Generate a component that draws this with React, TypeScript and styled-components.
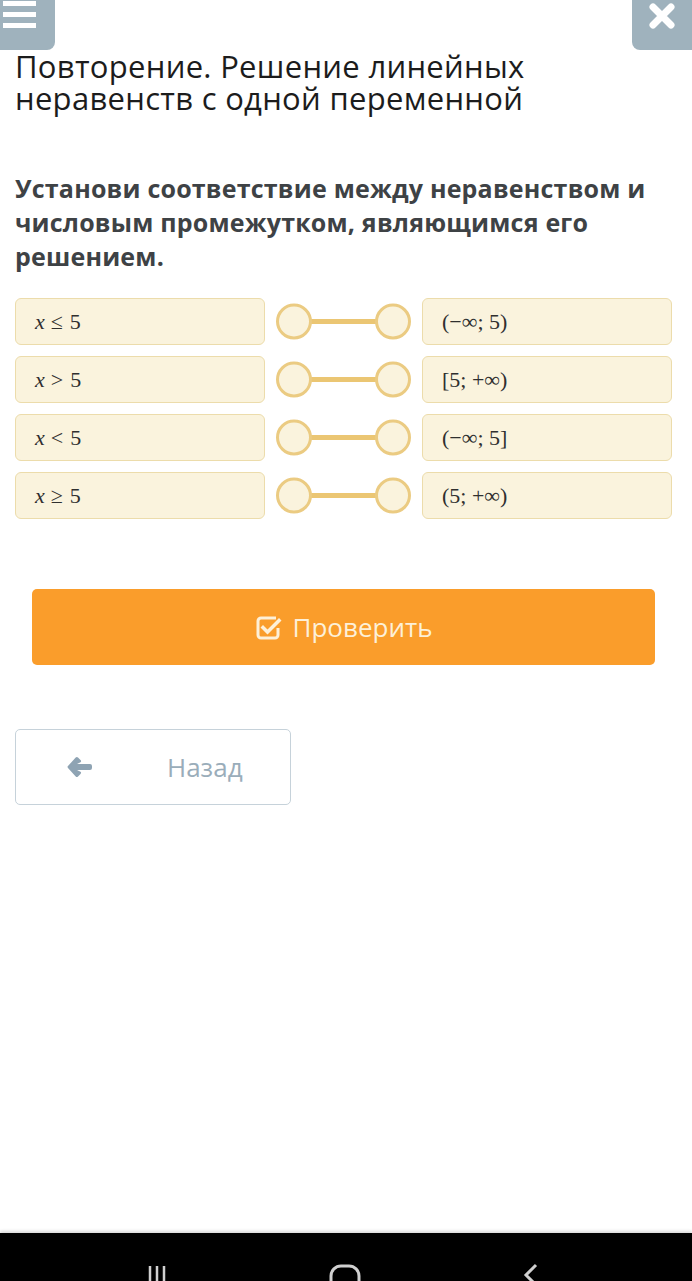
import styled, { createGlobalStyle } from "styled-components";

const GlobalStyle = createGlobalStyle`
    html, body {
        margin: 0;
        padding: 0;
        background: #ffffff;
    }

    body {
        font-family: "Open Sans", "Noto Sans", sans-serif;
    }
`

const Page = styled.div`
    min-height: 100vh;
    display: flex;
    flex-direction: column;
    background: #ffffff;
`

const TopBar = styled.div`
    display: flex;
    justify-content: space-between;
    height: 50px;
`

const MenuButton = styled.div`
    width: 55px;
    height: 50px;
    background-color: #9fb2bd;
    border-bottom-right-radius: 8px;
    display: flex;
    flex-direction: column;
    gap: 6px;
    padding: 1px 0 0 3px;
    box-sizing: border-box;
`

const MenuBar = styled.span`
    display: block;
    width: 33px;
    height: 5px;
    background: #ffffff;
`

const CloseButton = styled.div`
    width: 60px;
    height: 50px;
    background-color: #9fb2bd;
    border-bottom-left-radius: 8px;
    display: flex;
    justify-content: center;
    padding-top: 3px;
    box-sizing: border-box;
`

const Content = styled.div`
    padding: 0 20px 0 15px;
`

const Title = styled.h1`
    margin: 0;
    font-size: 31px;
    line-height: 32px;
    font-weight: 400;
    color: #1c1c1c;
    letter-spacing: 0.3px;
`

const TitleLine = styled.span`
    display: block;
`

const Question = styled.p`
    margin: 57px 0 0;
    font-size: 25px;
    line-height: 34px;
    font-weight: 700;
    color: #3e4245;
    letter-spacing: 0.2px;
`

const Pairs = styled.div`
    margin-top: 25px;
    display: flex;
    flex-direction: column;
    gap: 11px;
`

const PairRow = styled.div`
    display: grid;
    grid-template-columns: 250px 1fr 250px;
    height: 47px;
`

const Card = styled.div`
    background-color: #faf3dd;
    border: 1px solid #ecdcab;
    border-radius: 6px;
    display: flex;
    align-items: center;
    padding-left: 19px;
    box-sizing: border-box;
    font-family: "Liberation Serif", "DejaVu Serif", serif;
    font-size: 22px;
    color: #2f2f2f;
`

const MathVar = styled.i`
    font-style: italic;
`

const MathRel = styled.span`
    margin: 0 7px 0 6px;
`

const Actions = styled.div`
    margin-top: 70px;
    padding: 0 37px 0 32px;
`

const CheckButton = styled.button`
    width: 100%;
    height: 76px;
    border: none;
    border-radius: 5px;
    background-color: #fa9d2b;
    color: #fdf0d8;
    font-family: "Open Sans", sans-serif;
    font-size: 26px;
    display: flex;
    align-items: center;
    justify-content: center;
    gap: 9px;
    padding: 0 0 0 2px;
`

const BackRow = styled.div`
    margin-top: 64px;
    padding-left: 15px;
`

const BackButton = styled.button`
    width: 276px;
    height: 76px;
    background: #ffffff;
    border: 1px solid #c6d2da;
    border-radius: 5px;
    display: flex;
    align-items: center;
    padding: 0 0 0 51px;
    box-sizing: border-box;
    color: #9aadba;
    font-family: "Open Sans", sans-serif;
    font-size: 26px;

    svg {
        margin-right: 74px;
    }
`

const NavBar = styled.div`
    margin-top: auto;
    height: 48px;
    background: #000000;
    box-shadow: 0 -2px 3px rgba(0, 0, 0, 0.15);
    display: flex;
    justify-content: space-between;
    padding: 29px 150px 0 146px;
    box-sizing: border-box;
    overflow: hidden;
`

const Connector = () => (
    <svg width="157" height="47" viewBox="0 0 157 47">
        <rect x="44" y="21" width="69" height="5" fill="#ebc673" />
        <circle cx="29" cy="23.5" r="16.5" fill="#faf3dd" stroke="#ebcb82" strokeWidth="3" />
        <circle cx="128" cy="23.5" r="16.5" fill="#faf3dd" stroke="#ebcb82" strokeWidth="3" />
    </svg>
)

const CheckIcon = () => (
    <svg width="27" height="25" viewBox="0 0 27 25">
        <path d="M20 3 H5 a3 3 0 0 0 -3 3 V20 a3 3 0 0 0 3 3 H19 a3 3 0 0 0 3 -3 V13" fill="none" stroke="#fdf0d8" strokeWidth="3" />
        <path d="M7 10 L11.5 14.5 L23 3 L25.5 5.5 L11.5 19.5 L4.5 12.5 Z" fill="#fdf0d8" />
    </svg>
)

const CloseIcon = () => (
    <svg width="26" height="26" viewBox="0 0 26 26">
        <path d="M4 4 L22 22 M22 4 L4 22" stroke="#ffffff" strokeWidth="7" strokeLinecap="round" />
    </svg>
)

const BackArrow = () => (
    <svg width="26" height="22" viewBox="0 0 26 22">
        <path
            d="M11 1.5 L13.5 4 a1.6 1.6 0 0 1 0 2.3 L10 8 H23 a2 2 0 0 1 2 2 V12 a2 2 0 0 1 -2 2 H10 L13.5 15.7 a1.6 1.6 0 0 1 0 2.3 L11 20.5 a1.6 1.6 0 0 1 -2.3 0 L1.2 12.2 a1.6 1.6 0 0 1 0 -2.4 L8.7 1.5 a1.6 1.6 0 0 1 2.3 0 Z"
            fill="#8ea3b3"
        />
    </svg>
)

const NavIcons = () => (
    <>
        <svg width="24" height="20" viewBox="0 0 24 20">
            <path d="M4 4 V20 M11 4 V20 M18 4 V20" stroke="#d0d0d0" strokeWidth="2.5" />
        </svg>
        <svg width="32" height="20" viewBox="0 0 32 20">
            <rect x="2" y="4" width="28" height="28" rx="10" fill="none" stroke="#d0d0d0" strokeWidth="3" />
        </svg>
        <svg width="22" height="20" viewBox="0 0 22 20">
            <path d="M16 3 L6 13 L16 23" fill="none" stroke="#d0d0d0" strokeWidth="3" />
        </svg>
    </>
)

type Pair = {
    left: [string, string];
    right: string;
};

const pairs: Pair[] = [
    { left: ["≤", "5"], right: "(−∞; 5)" },
    { left: [">", "5"], right: "[5; +∞)" },
    { left: ["<", "5"], right: "(−∞; 5]" },
    { left: ["≥", "5"], right: "(5; +∞)" },
];

const App = () => {
    return (
        <Page>
            <GlobalStyle />
            <TopBar>
                <MenuButton>
                    <MenuBar />
                    <MenuBar />
                    <MenuBar />
                </MenuButton>
                <CloseButton>
                    <CloseIcon />
                </CloseButton>
            </TopBar>
            <Content>
                <Title>
                    <TitleLine>Повторение. Решение линейных</TitleLine>
                    <TitleLine>неравенств с одной переменной</TitleLine>
                </Title>
                <Question>
                    Установи соответствие между неравенством и числовым промежутком, являющимся его решением.
                </Question>
                <Pairs>
                    {pairs.map((p) => (
                        <PairRow key={p.right}>
                            <Card>
                                <MathVar>x</MathVar>
                                <MathRel>{p.left[0]}</MathRel>
                                {p.left[1]}
                            </Card>
                            <Connector />
                            <Card>{p.right}</Card>
                        </PairRow>
                    ))}
                </Pairs>
            </Content>
            <Actions>
                <CheckButton>
                    <CheckIcon />
                    Проверить
                </CheckButton>
            </Actions>
            <BackRow>
                <BackButton>
                    <BackArrow />
                    Назад
                </BackButton>
            </BackRow>
            <NavBar>
                <NavIcons />
            </NavBar>
        </Page>
    )
}

export default App;
